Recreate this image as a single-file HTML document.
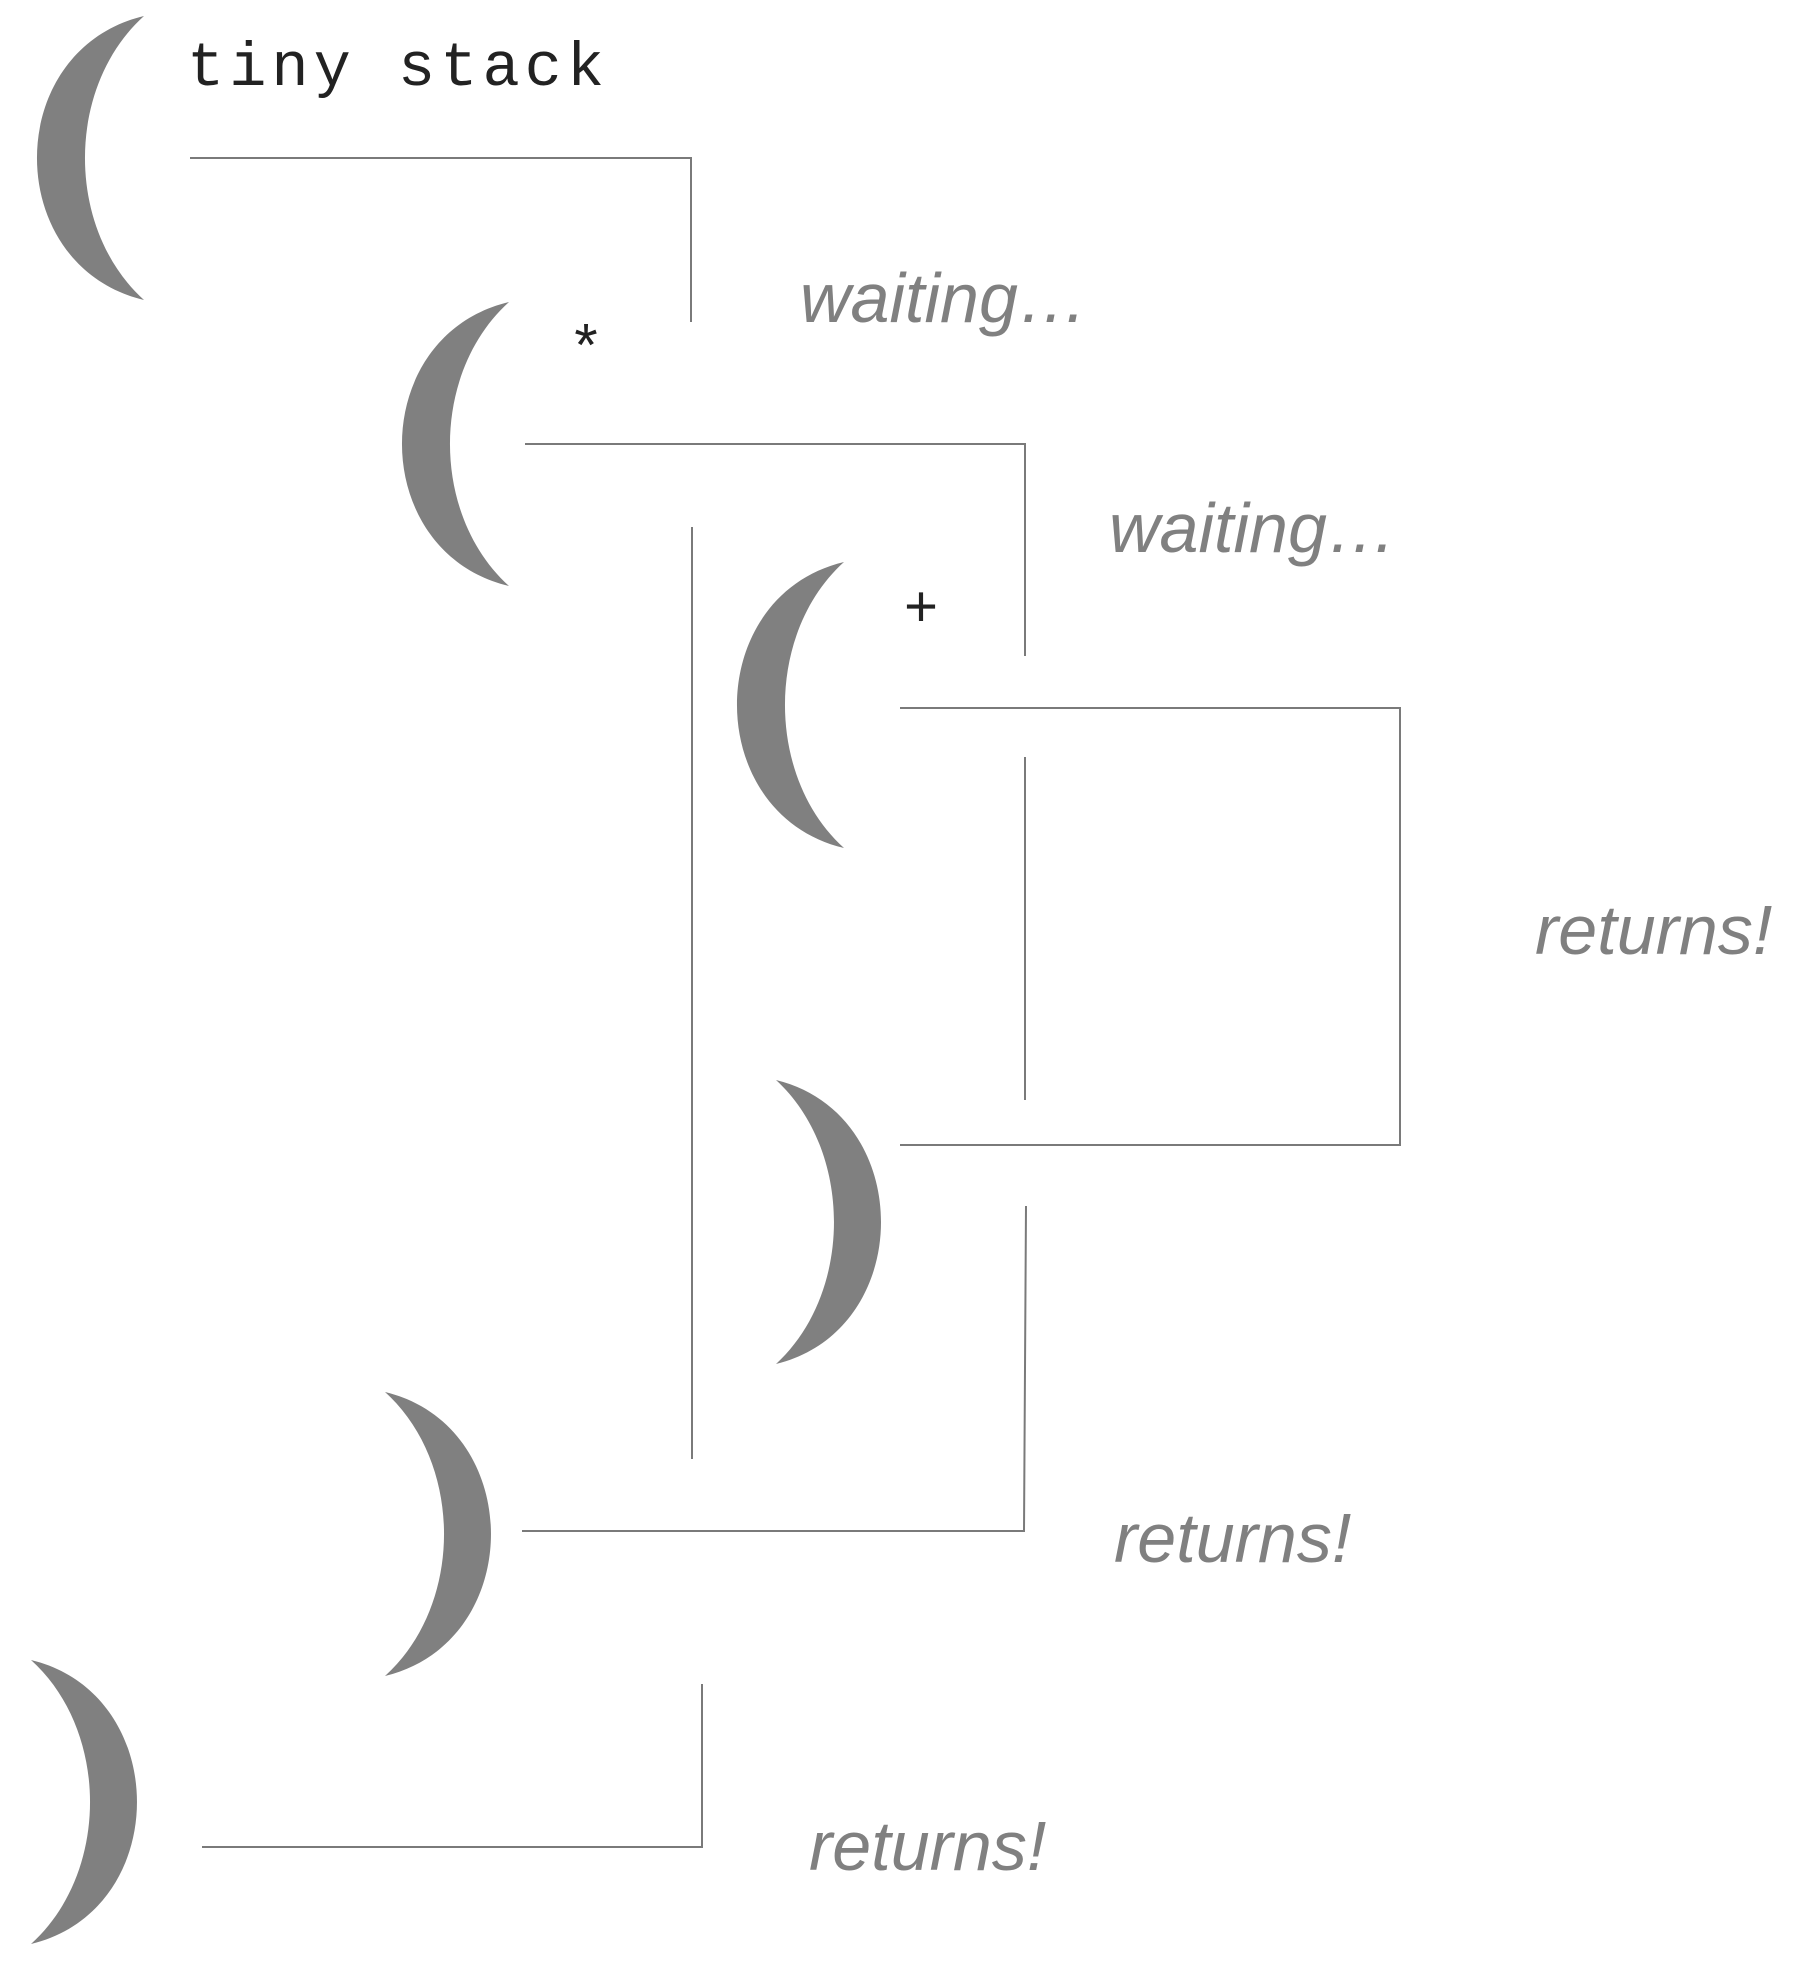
<!DOCTYPE html>
<html><head><meta charset="utf-8"><style>
html,body{margin:0;padding:0;background:#fff;width:1800px;height:1963px;overflow:hidden}
svg{display:block}
</style></head><body>
<svg width="1800" height="1963" viewBox="0 0 1800 1963" xmlns="http://www.w3.org/2000/svg">
<g fill="#808080">
<path d="M144 16 C1.3 50 1.3 266 144 300 C65.3 229 65.3 87 144 16Z"/>
<path d="M509 302 C366.3 336 366.3 552 509 586 C430.3 515 430.3 373 509 302Z"/>
<path d="M844 562 C701.3 596 701.3 814 844 848 C765.3 777 765.3 633 844 562Z"/>
<path d="M776 1080 C916 1114 916 1330 776 1364 C853.3 1293 853.3 1151 776 1080Z"/>
<path d="M385 1392 C526.3 1426 526.3 1642 385 1676 C463.7 1605 463.7 1463 385 1392Z"/>
<path d="M31 1660 C172.3 1694 172.3 1910 31 1944 C109.7 1873 109.7 1731 31 1660Z"/>
</g>
<g fill="none" stroke="#7a7a7a" stroke-width="2">
<polyline points="190,158 691,158 691,322"/>
<polyline points="525,444 1025,444 1025,656"/>
<line x1="692" y1="527" x2="692" y2="1459"/>
<polyline points="900,708 1400,708 1400,1145 900,1145"/>
<line x1="1025" y1="757" x2="1025" y2="1100"/>
<polyline points="1026,1206 1024,1531 522,1531"/>
<polyline points="702,1684 702,1847 202,1847"/>
</g>
<text x="187" y="85" font-family="Liberation Mono, monospace" font-size="62" letter-spacing="5" fill="#222">tiny stack</text>
<text x="586" y="368" font-family="Liberation Mono, monospace" font-size="60" text-anchor="middle" fill="#222">*</text>
<text x="921" y="626" font-family="Liberation Mono, monospace" font-size="58" text-anchor="middle" fill="#222">+</text>
<g font-family="Liberation Sans, Arial, sans-serif" font-style="italic" font-size="70" fill="#808080">
<text x="800" y="322">waiting…</text>
<text x="1109" y="552">waiting…</text>
<text x="1535" y="954">returns!</text>
<text x="1114" y="1562">returns!</text>
<text x="809" y="1870">returns!</text>
</g>
</svg>
</body></html>
